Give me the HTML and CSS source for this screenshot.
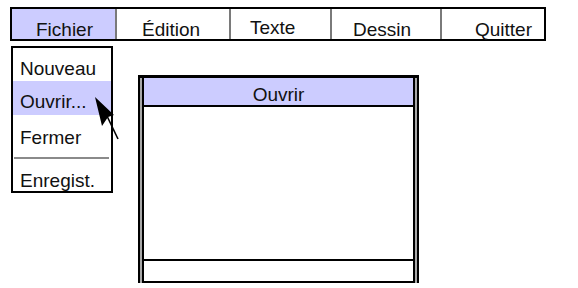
FILE: index.html
```html
<!DOCTYPE html>
<html lang="fr">
<head>
<meta charset="utf-8">
<title>Menu</title>
<link rel="stylesheet" href="styles.css">
</head>
<body>
<div class="page">
  <nav class="menubar">
    <div class="menu-item active m-fichier">Fichier</div>
    <div class="menu-item m-edition">Édition</div>
    <div class="menu-item m-texte">Texte</div>
    <div class="menu-item m-dessin">Dessin</div>
    <div class="menu-item m-quitter">Quitter</div>
  </nav>
  <div class="stage">
    <ul class="dropdown">
      <li class="dd-item dd-nouveau">Nouveau</li>
      <li class="dd-item dd-ouvrir selected">Ouvrir...</li>
      <li class="dd-item dd-fermer">Fermer</li>
      <li class="dd-sep"></li>
      <li class="dd-item dd-enreg">Enregist.</li>
    </ul>
    <div class="dialog">
      <div class="win">
        <div class="win-title">Ouvrir</div>
        <div class="win-body"></div>
        <div class="win-footer"></div>
      </div>
    </div>
  </div>
  <svg class="cursor" width="578" height="288" viewBox="0 0 578 288" aria-hidden="true">
    <polygon points="95,97 114,115 108,117 102,126" fill="#000"/>
    <line x1="107" y1="116" x2="118" y2="139" stroke="#000" stroke-width="1.6"/>
  </svg>
</div>
</body>
</html>
```

FILE: styles.css
```css
html, body {
  margin: 0;
  padding: 0;
  background: #fff;
}

.page {
  position: relative;
  width: 578px;
  height: 288px;
  overflow: hidden;
  font-family: "Liberation Sans", Arial, sans-serif;
  font-size: 19px;
  color: #111;
}

.menubar {
  margin: 7px 0 0 10px;
  width: 536px;
  height: 34px;
  box-sizing: border-box;
  border: 2px solid #000;
  display: grid;
  grid-template-columns: 105px 114px 101px 110px 102px;
}

.menu-item {
  box-sizing: border-box;
  height: 30px;
  padding-top: 11px;
  line-height: 20px;
  border-right: 2px solid #7a7a7a;
  white-space: nowrap;
}

.menu-item:last-child {
  border-right: none;
}

.menu-item.active {
  background: #ccccff;
}

.m-fichier { padding-left: 24px; }
.m-edition { padding-left: 25px; }
.m-texte { padding-left: 19px; padding-top: 9px; }
.m-dessin { padding-left: 21px; }
.m-quitter { padding-left: 33px; }

.stage {
  display: flex;
  align-items: flex-start;
}

.dropdown {
  list-style: none;
  margin: 5px 0 0 11px;
  padding: 0;
  width: 102px;
  box-sizing: border-box;
  border: 2px solid #000;
}

.dd-item {
  box-sizing: border-box;
  padding-left: 7px;
  line-height: 20px;
  white-space: nowrap;
}

.dd-nouveau { height: 33px; padding-top: 11px; }
.dd-ouvrir { height: 34px; padding-top: 11px; }
.dd-fermer { height: 42px; padding-top: 13px; }
.dd-enreg { height: 32px; padding-top: 12px; }

.dd-item.selected {
  background: #ccccff;
}

.dd-sep {
  height: 2px;
  margin: 0 2px 0 1px;
  background: #8a8a8a;
}

.dialog {
  margin: 34px 0 0 25px;
  width: 281px;
  box-sizing: border-box;
  border: 2px solid #000;
  border-top-width: 3px;
  border-bottom: none;
  background: #a8a8a8;
  padding: 0 2px;
}

.win {
  box-sizing: border-box;
  border-left: 2px solid #000;
  border-right: 2px solid #000;
  background: #fff;
}

.win-title {
  box-sizing: border-box;
  height: 29px;
  padding-top: 7px;
  line-height: 20px;
  text-align: center;
  background: #ccccff;
  border-bottom: 2px solid #000;
}

.win-body {
  height: 152px;
}

.win-footer {
  height: 20px;
  border-top: 2px solid #000;
  border-bottom: 2px solid #000;
}

.cursor {
  position: absolute;
  left: 0;
  top: 0;
  pointer-events: none;
}
```
